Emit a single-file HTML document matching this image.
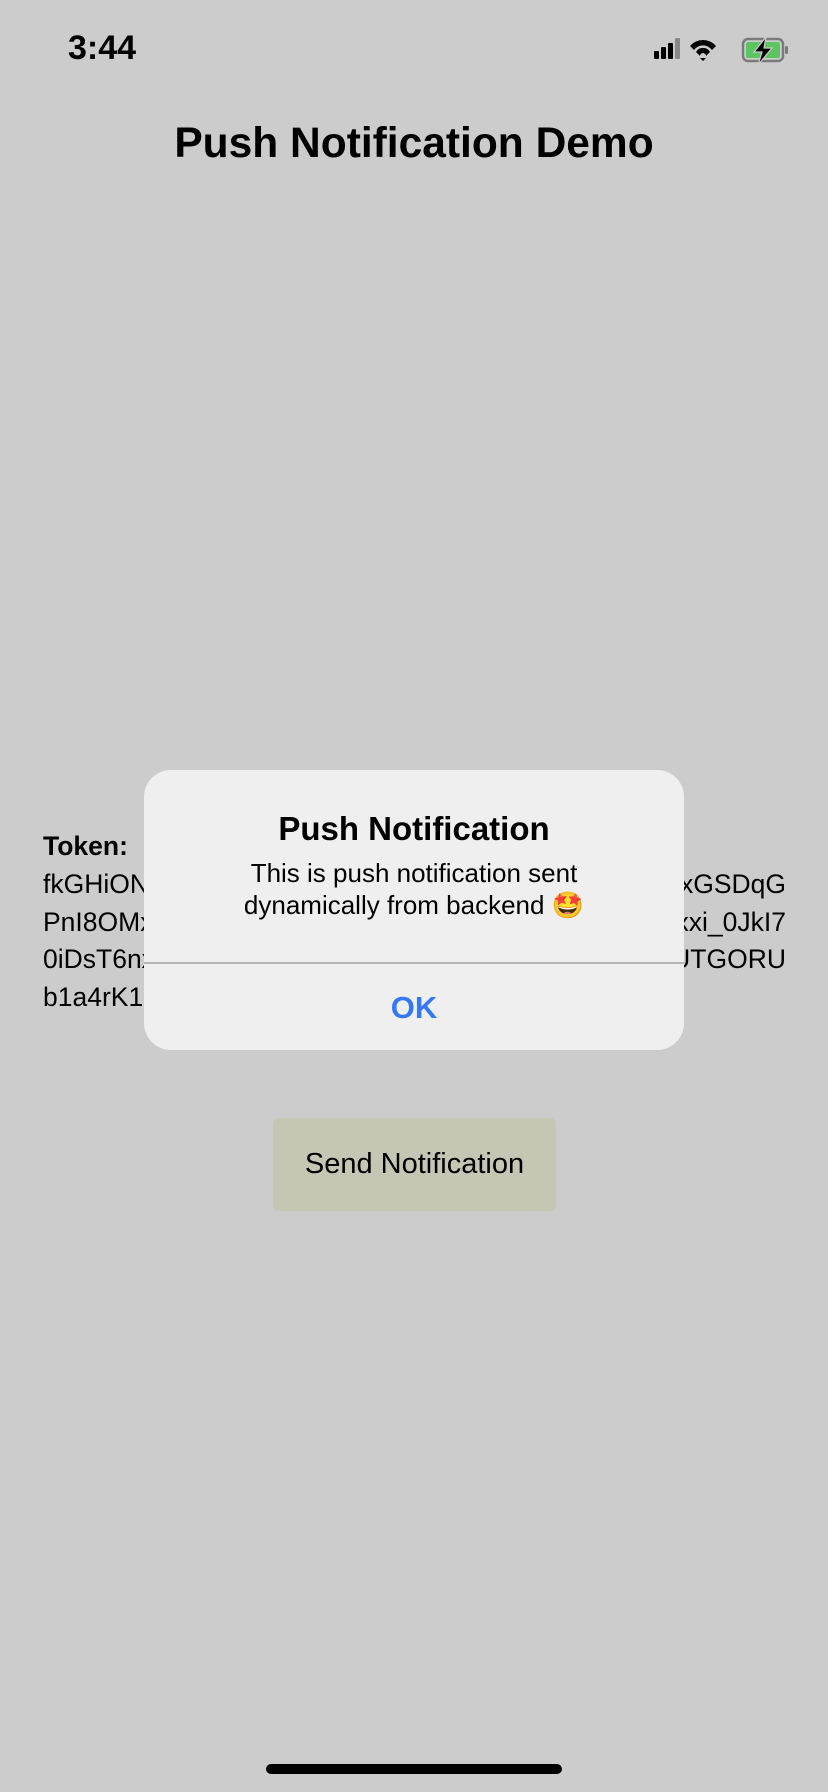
<!DOCTYPE html>
<html><head><meta charset="utf-8"><style>
body{margin:0;width:828px;height:1792px;background:#cccccc;position:relative;overflow:hidden;font-family:"Liberation Sans",sans-serif;color:#000}
.a{position:absolute;white-space:nowrap}
.tok{font-size:26.5px;line-height:37.7px}
</style></head><body>
<div class="a" style="left:68px;top:29px;font-size:34px;font-weight:bold">3:44</div>
<svg class="a" style="left:652px;top:35px" width="148" height="32" viewBox="0 0 148 32">
<rect x="2" y="16" width="5" height="8" rx="1" fill="#000"/><rect x="9" y="12" width="5" height="12" rx="1" fill="#000"/><rect x="16" y="8" width="5" height="16" rx="1" fill="#000"/><rect x="23" y="3" width="5" height="21" rx="1" fill="#888"/>
<path d="M38 11 A17 17 0 0 1 64 11 L60 15 A11 11 0 0 0 42 15Z M44 17 A8 8 0 0 1 58 17 L54 21 A3 3 0 0 0 48 21Z M48 23 L51 26 L54 23Z" fill="#000"/>
<rect x="91" y="4" width="40" height="22" rx="5" fill="none" stroke="#7a7a7a" stroke-width="2.5"/>
<rect x="94" y="7" width="34" height="16" rx="2" fill="#5dc560"/>
<rect x="133" y="11" width="3" height="8" rx="1.5" fill="#7a7a7a"/>
<path d="M114 2 L102 17 L110 17 L106 30 L120 13 L112 13 Z" fill="#000" stroke="#cccccc" stroke-width="1.2"/>
</svg>
<div class="a" style="left:0;width:828px;text-align:center;top:120px;font-size:42.5px;font-weight:bold">Push Notification Demo</div>

<div class="a tok" style="left:43px;top:828px;font-weight:bold">Token:</div>
<div class="a tok" style="left:43px;top:866px">fkGHiONxxxxxxxxxxxxxxxxxxxxxxxxxxxx<br>PnI8OMxxxxxxxxxxxxxxxxxxxxxxxxxxxx<br>0iDsT6nxxxxxxxxxxxxxxxxxxxxxxxxxx<br>b1a4rK1</div>
<div class="a tok" style="right:42px;top:866px;text-align:right">xxxxGSDqG<br>xxxxxxi_0JkI7<br>xxxxUTGORU</div>

<div class="a" style="left:144px;top:770px;width:540px;height:280px;background:#efefef;border-radius:27px;overflow:hidden">
<div class="a" style="left:0;width:540px;top:40px;text-align:center;font-size:33px;font-weight:bold">Push Notification</div>
<div class="a" style="left:0;width:540px;top:87px;text-align:center;font-size:26px;line-height:32px">This is push notification sent<br>dynamically from backend 🤩</div>
<div class="a" style="left:0;width:540px;top:192px;height:1.5px;background:#b5b5b5"></div>
<div class="a" style="left:0;width:540px;top:220px;text-align:center;font-size:31px;font-weight:bold;color:#3478f6">OK</div>
</div>

<div class="a" style="left:273px;top:1118px;width:283px;height:93px;background:#c6c6b4;border-radius:6px;text-align:center;line-height:93px;font-size:29px">Send Notification</div>
<div class="a" style="left:266px;top:1764px;width:296px;height:10px;border-radius:5px;background:#000"></div>
</body></html>
